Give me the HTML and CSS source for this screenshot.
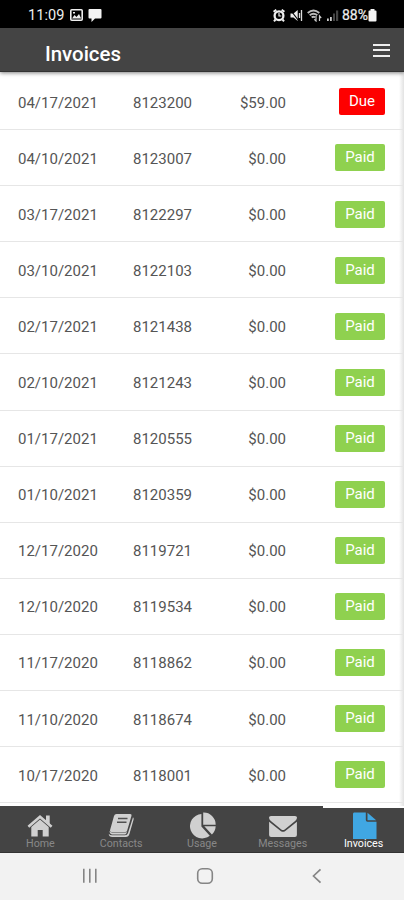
FILE: index.html
```
<!DOCTYPE html>
<html lang="en">
<head>
<meta charset="utf-8">
<title>Invoices</title>
<link rel="stylesheet" href="styles.css">
</head>
<body>
<div class="phone">
  <div class="status">
    <div class="status-left">
      <span class="clock">11:09</span>
      <svg width="13" height="12" viewBox="0 0 13 12"><rect x=".8" y=".8" width="11.4" height="10.4" rx="1" fill="none" stroke="#eee" stroke-width="1.6"/><path d="M2 9.5 4.5 6l2 2L9 5l2.2 4.5z" fill="#eee"/><path d="M3 3h2v1.5H3z" fill="#eee"/></svg>
      <svg width="14" height="13" viewBox="0 0 14 13"><path d="M1.5 0h11q1 0 1 1v7.5q0 1-1 1H7L3.500 13V9.500h-2q-1 0-1-1V1q0-1 1-1z" fill="#f4f4f4"/></svg>
    </div>
    <div class="status-right">
      <svg width="12" height="13" viewBox="0 0 12 13"><circle cx="6" cy="6.700" r="4.400" fill="none" stroke="#eee" stroke-width="2.300"/><path d="M.5 2.800 3.300.8M11.500 2.800 8.700.8M2.500 10.500 1 12.300M9.500 10.500 11 12.300" stroke="#eee" stroke-width="2"/><path d="M6 4v3h2.300" fill="none" stroke="#eee" stroke-width="1.200"/></svg>
      <svg width="13" height="13" viewBox="0 0 13 13"><path d="M.5 4.500h3L7.700 1v11L3.500 8.500h-3z" fill="#eee"/><path d="M.5 1 8.500 11.500" stroke="#000" stroke-width="1.200"/><path d="M11.500 1v11M9.500 4v5" stroke="#ddd" stroke-width="1.300"/></svg>
      <svg width="15" height="13" viewBox="0 0 15 13"><path d="M.7 4Q6.500-1 12.300 4M2.700 6.300Q6.500 3 10.300 6.300M4.700 8.500Q6.500 7 8 8.500" fill="none" stroke="#bbb" stroke-width="1.900"/><path d="m9 7v5L7.300 10.300M12.500 12V7l1.700 2" fill="none" stroke="#ccc" stroke-width="1.200"/></svg>
      <svg width="13" height="13" viewBox="0 0 13 13"><path d="M1 9.500h1.800v2.500H1zM4 8h1.800v4H4z" fill="#ccc"/><path d="M7 4.500h2V12H7zM10 1.500h2.200V12H10z" fill="#444"/></svg>
      <span class="battery">88%</span>
      <svg width="9" height="13" viewBox="0 0 9 13"><path d="M2.500 0h4v1.500h1q1 0 1 1v9q0 1-1 1h-6q-1 0-1-1v-9q0-1 1-1h1z" fill="#f4f4f4"/></svg>
    </div>
  </div>
  <header class="header">
    <h1>Invoices</h1>
    <div class="menu"><i></i><i></i><i></i></div>
  </header>
  <main class="list">
    <div class="row"><span class="date">04/17/2021</span><span class="num">8123200</span><span class="amount">$59.00</span><span class="tag due">Due</span></div>
    <div class="row"><span class="date">04/10/2021</span><span class="num">8123007</span><span class="amount">$0.00</span><span class="tag">Paid</span></div>
    <div class="row"><span class="date">03/17/2021</span><span class="num">8122297</span><span class="amount">$0.00</span><span class="tag">Paid</span></div>
    <div class="row"><span class="date">03/10/2021</span><span class="num">8122103</span><span class="amount">$0.00</span><span class="tag">Paid</span></div>
    <div class="row"><span class="date">02/17/2021</span><span class="num">8121438</span><span class="amount">$0.00</span><span class="tag">Paid</span></div>
    <div class="row"><span class="date">02/10/2021</span><span class="num">8121243</span><span class="amount">$0.00</span><span class="tag">Paid</span></div>
    <div class="row"><span class="date">01/17/2021</span><span class="num">8120555</span><span class="amount">$0.00</span><span class="tag">Paid</span></div>
    <div class="row"><span class="date">01/10/2021</span><span class="num">8120359</span><span class="amount">$0.00</span><span class="tag">Paid</span></div>
    <div class="row"><span class="date">12/17/2020</span><span class="num">8119721</span><span class="amount">$0.00</span><span class="tag">Paid</span></div>
    <div class="row"><span class="date">12/10/2020</span><span class="num">8119534</span><span class="amount">$0.00</span><span class="tag">Paid</span></div>
    <div class="row"><span class="date">11/17/2020</span><span class="num">8118862</span><span class="amount">$0.00</span><span class="tag">Paid</span></div>
    <div class="row"><span class="date">11/10/2020</span><span class="num">8118674</span><span class="amount">$0.00</span><span class="tag">Paid</span></div>
    <div class="row"><span class="date">10/17/2020</span><span class="num">8118001</span><span class="amount">$0.00</span><span class="tag">Paid</span></div>
  </main>
  <nav class="tabs">
    <div class="tab">
      <svg width="28" height="28" viewBox="0 0 28 28"><path d="M2.400 15.800 14 5.700l11.600 10.100" fill="none" stroke="#d0d0d0" stroke-width="2.600"/><path d="M20 4.500h3.700V14L20 10.500zM5.300 16 14 8.500l8.700 7.500v9.500h-6V19h-5v6.500H5.300z" fill="#d0d0d0"/></svg>
      <span>Home</span>
    </div>
    <div class="tab">
      <svg width="28" height="28" viewBox="0 0 28 28"><path d="M9.500 3h13.700q1.800 0 1.300 1.800l-4.300 14.700q-.4 1.500-2 1.500H4.500q-2 0-1.500-1.800L7 5Q7.600 3 9.500 3z" fill="#d0d0d0"/><path d="M26 6.300q1 .8.600 2.200l-4.100 14.300Q21.600 26 18.700 26H5.300q-3.300 0-3.600-3.300Q3 24.200 5.200 24.200h12.800q2.400 0 3-2.200z" fill="#d0d0d0"/><path d="M2.500 19.800Q3 21.500 5 21.500h13.500q1.300 0 1.800-1.300l-.7 1.700q-.6 1.500-2 1.500H5q-2.500-.4-2.500-3.600z" fill="#d0d0d0"/><path d="M11 7.500h9.500M10 11.200h9.500" stroke="#505050" stroke-width="1.400"/></svg>
      <span>Contacts</span>
    </div>
    <div class="tab">
      <svg width="28" height="28" viewBox="0 0 28 28"><path d="M13.400 3v12.500l8.400 9.200A12.200 12.200 0 1 1 13.400 3z" fill="#d0d0d0"/><path d="M15.200 1.600A12 12 0 0 1 27.700 13.700H15.200zM16.300 15.300h11.400q-.3 4.900-3.800 8.200z" fill="#d0d0d0"/></svg>
      <span>Usage</span>
    </div>
    <div class="tab">
      <svg width="28" height="28" viewBox="0 0 28 28"><path d="M2 5h24q2 0 2 1.500 0 2-1.600 3.200L15.700 18.500q-1.700 1.200-3.400 0L1.600 9.700Q0 8.500 0 6.500 0 5 2 5z" fill="#d0d0d0"/><path d="M.1 10.700 12 20.200q2 1.300 4 0l11.900-9.500V24q0 2-2 2H2.100q-2 0-2-2z" fill="#d0d0d0"/></svg>
      <span>Messages</span>
    </div>
    <div class="tab active">
      <svg width="28" height="28" viewBox="0 0 28 28"><path d="M4 1.500h11.800v7.500q0 1.700 1.700 1.700H26.500V28H3V3Q3 1.500 4 1.500z" fill="#40a7e3"/><path d="M17.500 1.800 26.200 9.300h-8.700z" fill="#40a7e3"/></svg>
      <span>Invoices</span>
    </div>
  </nav>
  <div class="system">
    <svg width="16" height="16" viewBox="0 0 16 16"><path d="M1.800.8v14M7.800.8v14M13.800.8v14" stroke="#858585" stroke-width="1.600"/></svg>
    <svg width="18" height="18" viewBox="0 0 18 18"><rect x="1.700" y="1.700" width="14.600" height="14.600" rx="4.500" fill="none" stroke="#858585" stroke-width="1.600"/></svg>
    <svg width="12" height="16" viewBox="0 0 12 16"><path d="M9.500 1.300 2.500 8l7 6.700" fill="none" stroke="#858585" stroke-width="1.700"/></svg>
  </div>
</div>
</body>
</html>
```
FILE: styles.css
```
* { box-sizing: border-box; }
body { margin: 0; font-family: Roboto, "Liberation Sans", sans-serif; background: #fff; }
svg { display: block; flex: none; }
.phone { width: 404px; height: 900px; display: flex; flex-direction: column; overflow: hidden; }
.status { height: 28px; flex: none; background: #000; color: #eee; display: flex; justify-content: space-between; padding: 2px 26px 0 28px; }
.status-left, .status-right { display: flex; align-items: center; }
.status-left { gap: 5px; }
.status-right { gap: 4px; padding-right: 1px; }
.status-right svg:first-child { margin-right: 1px; }
.clock { font-size: 14.5px; letter-spacing: .1px; }
.battery { font-size: 14px; letter-spacing: 0; margin: 0 -4px 0 -1px; -webkit-text-stroke: .2px #eee; }
.header { height: 44px; flex: none; background: #444; border-bottom: 1px solid #333; color: #fff; display: flex; justify-content: space-between; padding: 0 14px 0 45px; box-shadow: 0 1px 4px rgba(0,0,0,.5); z-index: 1; }
.header h1 { margin: 0; font-size: 20.4px; line-height: 52px; font-weight: 500; }
.menu { display: flex; flex-direction: column; gap: 3px; padding-top: 16px; }
.menu i { width: 17px; height: 2px; margin-bottom: .4px; background: #eee; }
.list { flex: none; height: 734px; padding-top: 2px; background: linear-gradient(to left, #e2e2e2, #fff 5px); }
.row { height: 56.1px; border-bottom: 1px solid #e6e6e6; display: grid; grid-template-columns: 115px 80px 73px 99px; padding: 2px 0 0 18px; align-items: center; font-size: 15px; line-height: 20px; color: #555; }
.amount { text-align: right; font-size: 15px; }
.tag { justify-self: end; width: 50px; height: 27px; margin-bottom: 1.4px; border-radius: 2px; background: #8fd14f; color: #fff; text-align: center; line-height: 27px; }
.due { width: 46px; background: #fe0000; }
.tabs { height: 47px; flex: none; background: #444; border-bottom: 1px solid #333; display: flex; }
.tab { flex: 1; display: flex; flex-direction: column; align-items: center; padding-top: 5px; color: #888; font-size: 10.7px; line-height: 12px; }
.tab svg { margin-bottom: -1px; }
.active { border-top: 2px solid #fff; padding-top: 3px; color: #fff; }
.system { flex: 1; background: #f2f2f2; display: flex; align-items: center; justify-content: space-between; padding: 0 81px 1px 82px; }
```
